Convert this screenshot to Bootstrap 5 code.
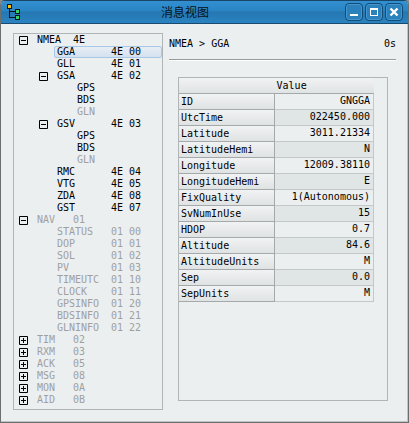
<!DOCTYPE html>
<html lang="zh-CN">
<head>
<meta charset="utf-8">
<meta name="viewport" content="width=device-width, initial-scale=1">
<title>消息视图</title>
<link href="https://cdn.jsdelivr.net/npm/bootstrap@5.3.0/dist/css/bootstrap.min.css" rel="stylesheet">
<style>
  body { background: #8c8c8c; color: #000; font: 10px/12px "DejaVu Sans Mono", "Liberation Mono", monospace; }
  .window-frame { background: #ebeff0; border: 1px solid #6b6f70; border-top-color: #1a4566; border-radius: 5px 5px 0 0; box-shadow: inset -1px -1px #bfc3c4; overflow: hidden; }
  .title-bar { height: 23px; padding: 0 5px; background: linear-gradient(#3190d2, #2a84c2 45%, #2577b1 50%, #2a83c0); border-bottom: 1px solid #194b70; }
  .title-text { font: 12px/16px "Noto Sans CJK SC", sans-serif; color: #04121e; }
  .title-icon { width: 19px; padding-left: 1px; }
  .win-btn { width: 18px; height: 18px; padding: 0; border: 1px solid #124b76; border-radius: 4px; background: #2b81bc; box-shadow: inset 0 0 0 1px #4496cd; }
  .win-btns { gap: 2px; }
  .content { padding: 9px 12px 12px; gap: 6px; }
  .tree-panel { flex: 0 0 150px; border: 1px solid #b0b5b6; padding-bottom: 3px; }
  .tree-row { display: flex; height: 12px; padding-left: 23px; white-space: pre; }
  .tree-row.level-2 { padding-left: 43px; }
  .tree-row.level-3 { padding-left: 63px; }
  .tree-row.foldable { padding-left: 5px; }
  .tree-row.level-2.foldable { padding-left: 25px; }
  .fold-btn { width: 9px; height: 12px; margin-right: 9px; padding: 0; border: 0; background: none; display: flex; align-items: center; }
  .code-2 { width: 36px; }
  .code-3 { width: 54px; }
  .is-off { color: #a0a0a0; }
  .tree-row.selected { margin-left: 40px; padding-left: 2px; background: linear-gradient(#e8eef4, #d3e1ef); border: 1px solid #a9c8e6; border-radius: 2px; line-height: 10px; }
  .path-bar { height: 27px; padding-top: 5px; border-bottom: 1px solid #989c9d; box-shadow: 0 1px #fff; }
  .table-panel { margin: 17px 8px 9px 9px; border: 1px solid #b0b5b6; padding-right: 13px; }
  .value-table { width: 100%; border-collapse: separate; border-spacing: 0; table-layout: fixed; }
  .value-table th { height: 16px; padding: 1px 2px 0; font-weight: normal; line-height: 12px; background: linear-gradient(#f1f2f3, #e0e3e3); border-bottom: 1px solid #a5a9aa; }
  .value-table .name-col { width: 49%; }
  .value-table tbody th { border-right: 1px solid #a5a9aa; }
  .value-table td { height: 16px; padding: 0 3px 1px; text-align: right; background: #ebeff0; border-right: 1px solid #c3c8c9; border-bottom: 1px solid #c3c8c9; }
  .value-table tbody tr:nth-child(even) td { background: #e0e6e5; }
</style>
<script src="https://cdn.jsdelivr.net/npm/bootstrap@5.3.0/dist/js/bootstrap.bundle.min.js"></script>
</head>
<body>
<svg class="d-none">
  <symbol id="fold-open" viewBox="0 0 9 9"><path d="M.5 .5h8v8h-8zM2 4.5h5" fill="none" stroke="#000"/></symbol>
  <symbol id="fold-closed" viewBox="0 0 9 9"><path d="M.5 .5h8v8h-8zM2 4.5h5M4.5 2v5" fill="none" stroke="#000"/></symbol>
</svg>
<div class="window-frame min-vh-100 d-flex flex-column">
  <header class="title-bar d-flex align-items-center justify-content-between">
    <div class="title-icon">
      <svg width="14" height="16" viewBox="0 0 14 16" class="d-block" shape-rendering="crispEdges" aria-hidden="true">
        <path d="M2.500 5v8.500H8M2.500 7.500H8" fill="none" stroke="#041520"/>
        <path d="M.5 .5h4v4h-4z" fill="#ffc20a" stroke="#041520"/>
        <path d="M8.500 5.500h4v4h-4zM8.500 11.500h4v4h-4z" fill="#35d36c" stroke="#041520"/>
      </svg>
    </div>
    <div class="title-text">消息视图</div>
    <div class="win-btns d-flex">
      <button type="button" class="win-btn d-flex" aria-label="Minimize"><svg width="16" height="16"><path d="M4 11h8" stroke="#fff" stroke-width="2"/></svg></button>
      <button type="button" class="win-btn d-flex" aria-label="Maximize"><svg width="16" height="16" shape-rendering="crispEdges"><path d="M4 11.500h8M4.500 4v8M11.500 4v8" fill="none" stroke="#fff"/><path d="M4 5h8" stroke="#fff" stroke-width="2"/></svg></button>
      <button type="button" class="win-btn d-flex" aria-label="Close"><svg width="16" height="16"><path d="M4.500 4.500l7 7M11.500 4.500l-7 7" stroke="#fff" stroke-width="2.400"/></svg></button>
    </div>
  </header>
  <main class="content d-flex flex-fill">
    <nav class="tree-panel" aria-label="Messages">
      <div class="tree-row foldable"><button type="button" class="fold-btn" aria-label="Collapse NMEA"><svg width="9" height="9"><use href="#fold-open"/></svg></button><span class="code-2">NMEA</span><span>4E</span></div>
      <div class="tree-row level-2 selected"><span class="code-3">GGA</span><span>4E 00</span></div>
      <div class="tree-row level-2"><span class="code-3">GLL</span><span>4E 01</span></div>
      <div class="tree-row level-2 foldable"><button type="button" class="fold-btn" aria-label="Collapse GSA"><svg width="9" height="9"><use href="#fold-open"/></svg></button><span class="code-3">GSA</span><span>4E 02</span></div>
      <div class="tree-row level-3">GPS</div>
      <div class="tree-row level-3">BDS</div>
      <div class="tree-row level-3 is-off">GLN</div>
      <div class="tree-row level-2 foldable"><button type="button" class="fold-btn" aria-label="Collapse GSV"><svg width="9" height="9"><use href="#fold-open"/></svg></button><span class="code-3">GSV</span><span>4E 03</span></div>
      <div class="tree-row level-3">GPS</div>
      <div class="tree-row level-3">BDS</div>
      <div class="tree-row level-3 is-off">GLN</div>
      <div class="tree-row level-2"><span class="code-3">RMC</span><span>4E 04</span></div>
      <div class="tree-row level-2"><span class="code-3">VTG</span><span>4E 05</span></div>
      <div class="tree-row level-2"><span class="code-3">ZDA</span><span>4E 08</span></div>
      <div class="tree-row level-2"><span class="code-3">GST</span><span>4E 07</span></div>
      <div class="tree-row foldable is-off"><button type="button" class="fold-btn" aria-label="Collapse NAV"><svg width="9" height="9"><use href="#fold-open"/></svg></button><span class="code-2">NAV</span><span>01</span></div>
      <div class="tree-row level-2 is-off"><span class="code-3">STATUS</span><span>01 00</span></div>
      <div class="tree-row level-2 is-off"><span class="code-3">DOP</span><span>01 01</span></div>
      <div class="tree-row level-2 is-off"><span class="code-3">SOL</span><span>01 02</span></div>
      <div class="tree-row level-2 is-off"><span class="code-3">PV</span><span>01 03</span></div>
      <div class="tree-row level-2 is-off"><span class="code-3">TIMEUTC</span><span>01 10</span></div>
      <div class="tree-row level-2 is-off"><span class="code-3">CLOCK</span><span>01 11</span></div>
      <div class="tree-row level-2 is-off"><span class="code-3">GPSINFO</span><span>01 20</span></div>
      <div class="tree-row level-2 is-off"><span class="code-3">BDSINFO</span><span>01 21</span></div>
      <div class="tree-row level-2 is-off"><span class="code-3">GLNINFO</span><span>01 22</span></div>
      <div class="tree-row foldable is-off"><button type="button" class="fold-btn" aria-label="Expand TIM"><svg width="9" height="9"><use href="#fold-closed"/></svg></button><span class="code-2">TIM</span><span>02</span></div>
      <div class="tree-row foldable is-off"><button type="button" class="fold-btn" aria-label="Expand RXM"><svg width="9" height="9"><use href="#fold-closed"/></svg></button><span class="code-2">RXM</span><span>03</span></div>
      <div class="tree-row foldable is-off"><button type="button" class="fold-btn" aria-label="Expand ACK"><svg width="9" height="9"><use href="#fold-closed"/></svg></button><span class="code-2">ACK</span><span>05</span></div>
      <div class="tree-row foldable is-off"><button type="button" class="fold-btn" aria-label="Expand MSG"><svg width="9" height="9"><use href="#fold-closed"/></svg></button><span class="code-2">MSG</span><span>08</span></div>
      <div class="tree-row foldable is-off"><button type="button" class="fold-btn" aria-label="Expand MON"><svg width="9" height="9"><use href="#fold-closed"/></svg></button><span class="code-2">MON</span><span>0A</span></div>
      <div class="tree-row foldable is-off"><button type="button" class="fold-btn" aria-label="Expand AID"><svg width="9" height="9"><use href="#fold-closed"/></svg></button><span class="code-2">AID</span><span>0B</span></div>
    </nav>
    <section class="flex-fill d-flex flex-column">
      <div class="path-bar d-flex justify-content-between"><span>NMEA &gt; GGA</span><span>0s</span></div>
      <div class="table-panel flex-fill">
        <table class="value-table">
          <thead><tr><th class="name-col"></th><th scope="col">Value</th></tr></thead>
          <tbody>
            <tr><th scope="row">ID</th><td>GNGGA</td></tr>
            <tr><th scope="row">UtcTime</th><td>022450.000</td></tr>
            <tr><th scope="row">Latitude</th><td>3011.21334</td></tr>
            <tr><th scope="row">LatitudeHemi</th><td>N</td></tr>
            <tr><th scope="row">Longitude</th><td>12009.38110</td></tr>
            <tr><th scope="row">LongitudeHemi</th><td>E</td></tr>
            <tr><th scope="row">FixQuality</th><td>1(Autonomous)</td></tr>
            <tr><th scope="row">SvNumInUse</th><td>15</td></tr>
            <tr><th scope="row">HDOP</th><td>0.7</td></tr>
            <tr><th scope="row">Altitude</th><td>84.6</td></tr>
            <tr><th scope="row">AltitudeUnits</th><td>M</td></tr>
            <tr><th scope="row">Sep</th><td>0.0</td></tr>
            <tr><th scope="row">SepUnits</th><td>M</td></tr>
          </tbody>
        </table>
      </div>
    </section>
  </main>
</div>
</body>
</html>
